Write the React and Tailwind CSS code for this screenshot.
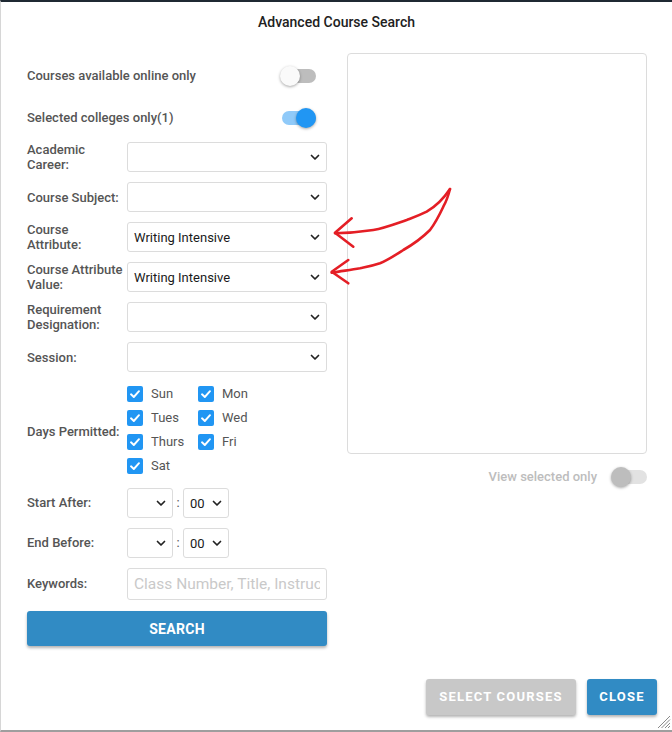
import React, { useState } from 'react';

const FONT = { fontFamily: 'Roboto, "Open Sans", Arial, sans-serif' };

const Chevron = () => (
    <svg width="10" height="7" viewBox="0 0 10 7" className="shrink-0">
        <path d="M1.5 1.5 L5 5 L8.5 1.5" fill="none" stroke="#222" strokeWidth="1.7" strokeLinecap="round" strokeLinejoin="round" />
    </svg>
);

const Toggle = ({ on, disabled }) => {
    const track = disabled ? 'bg-[#e2e2e2]' : on ? 'bg-[#90caf9]' : 'bg-[#bdbdbd]';
    const knob = disabled ? 'bg-[#bdbdbd] left-0' : on ? 'bg-[#2196f3] left-[16px]' : 'bg-[#fafafa] left-0';
    return (
        <div className="relative w-[36px] h-[20px] shrink-0">
            <div className={`absolute left-[2px] top-[3px] w-[34px] h-[14px] rounded-full ${track}`} />
            <div className={`absolute top-0 w-[20px] h-[20px] rounded-full shadow-[0_1px_3px_rgba(0,0,0,0.35)] ${knob}`} />
        </div>
    );
};

const SelectBox = ({ value, className = 'w-[200px]' }) => (
    <div className={`h-[30px] border border-[#dcdcdc] rounded-[3px] bg-white flex items-center justify-between pl-[6px] pr-[6px] ${className}`}>
        <span className="text-[13px] text-[#1a1a1a] whitespace-nowrap pt-[1px]">{value}</span>
        <Chevron />
    </div>
);

const FieldRow = ({ label, value }) => (
    <div className="flex items-center h-[30px]">
        <div className="w-[100px] text-[13px] leading-[15px] font-medium text-[#555] whitespace-nowrap">{label}</div>
        <SelectBox value={value} />
    </div>
);

const Check = ({ label }) => (
    <div className="flex items-center h-[24px]">
        <div className="w-[16px] h-[16px] rounded-[2px] bg-[#2196f3] flex items-center justify-center">
            <svg width="12" height="12" viewBox="0 0 12 12">
                <path d="M2 6.3 L4.8 9 L10 3.2" fill="none" stroke="white" strokeWidth="1.9" strokeLinecap="round" strokeLinejoin="round" />
            </svg>
        </div>
        <span className="ml-[8px] text-[13px] text-[#555]">{label}</span>
    </div>
);

const TimeRow = ({ label }) => (
    <div className="flex items-center h-[30px]">
        <div className="w-[100px] text-[13px] font-medium text-[#555]">{label}</div>
        <SelectBox value="" className="w-[46px]" />
        <span className="w-[10px] text-center text-[13px] text-[#555]">:</span>
        <SelectBox value="00" className="w-[46px]" />
    </div>
);

export default function App() {
    const [keywords, setKeywords] = useState('');

    return (
        <div style={FONT} className="relative w-[672px] h-[732px] bg-white border-t-2 border-t-[#1f2933] border-l border-l-[#d6d6d6] border-b-2 border-b-[#9e9e9e] flex flex-col overflow-hidden">
            {/* header */}
            <div className="h-[40px] flex items-center justify-center">
                <h1 className="text-[14px] font-medium text-[#212121]">Advanced Course Search</h1>
            </div>

            {/* body */}
            <div className="flex pl-[26px] pt-[11px] gap-[20px]">
                <div className="w-[300px] flex flex-col">
                    <div className="mt-[9px] h-[28px] flex items-center justify-between pr-[11px]">
                        <span className="text-[13px] font-medium text-[#555]">Courses available online only</span>
                        <Toggle on={false} />
                    </div>
                    <div className="mt-[14px] h-[28px] flex items-center justify-between pr-[11px]">
                        <span className="text-[13px] font-medium text-[#555]">Selected colleges only(1)</span>
                        <Toggle on />
                    </div>

                    <div className="mt-[10px] flex flex-col gap-[10px]">
                        <FieldRow label={<>Academic<br />Career:</>} value="" />
                        <FieldRow label="Course Subject:" value="" />
                        <FieldRow label={<>Course<br />Attribute:</>} value="Writing Intensive" />
                        <FieldRow label={<>Course Attribute<br />Value:</>} value="Writing Intensive" />
                        <FieldRow label={<>Requirement<br />Designation:</>} value="" />
                        <FieldRow label="Session:" value="" />
                    </div>

                    <div className="mt-[10px] flex items-center">
                        <div className="w-[100px] text-[13px] font-medium text-[#555] pt-[4px]">Days Permitted:</div>
                        <div className="grid grid-cols-[71px_71px]">
                            <Check label="Sun" />
                            <Check label="Mon" />
                            <Check label="Tues" />
                            <Check label="Wed" />
                            <Check label="Thurs" />
                            <Check label="Fri" />
                            <Check label="Sat" />
                        </div>
                    </div>

                    <div className="mt-[10px] flex flex-col gap-[10px]">
                        <TimeRow label="Start After:" />
                        <TimeRow label="End Before:" />
                    </div>

                    <div className="mt-[10px] flex items-center h-[32px]">
                        <div className="w-[100px] text-[13px] font-medium text-[#555]">Keywords:</div>
                        <input
                            value={keywords}
                            onChange={(e) => setKeywords(e.target.value)}
                            placeholder="Class Number, Title, Instructor"
                            className="w-[200px] h-[32px] border border-[#dcdcdc] rounded-[3px] px-[6px] text-[15.5px] text-[#222] placeholder:text-[#c9c9c9] outline-none"
                        />
                    </div>

                    <button className="mt-[11px] h-[35px] w-[300px] rounded-[3px] bg-[#318bc4] text-white text-[14px] font-bold tracking-[0.3px] pt-[2px] shadow-[0_2px_3px_rgba(0,0,0,0.3)]">
                        SEARCH
                    </button>
                </div>

                <div className="w-[300px] flex flex-col">
                    <div className="h-[401px] border border-[#dcdcdc] rounded-[4px]" />
                    <div className="mt-[13px] h-[20px] flex items-center justify-end gap-[14px]">
                        <span className="text-[13px] font-medium text-[#bdbdbd]">View selected only</span>
                        <Toggle disabled />
                    </div>
                </div>
            </div>

            {/* footer */}
            <div className="mt-auto flex justify-end gap-[11px] pr-[15px] pb-[15px]">
                <button className="h-[36px] w-[150px] rounded-[3px] bg-[#c8c8c8] text-white text-[13px] font-bold tracking-[1.2px] shadow-[0_2px_3px_rgba(0,0,0,0.3)]">
                    SELECT COURSES
                </button>
                <button className="h-[36px] w-[70px] rounded-[3px] bg-[#318bc4] text-white text-[13px] font-bold tracking-[1.2px] shadow-[0_2px_3px_rgba(0,0,0,0.3)]">
                    CLOSE
                </button>
            </div>

            {/* resize handle */}
            <svg className="absolute right-[1px] bottom-[1px]" width="14" height="14" viewBox="0 0 14 14">
                <path d="M13 1 L1 13 M13 4.5 L4.5 13 M13 8 L8 13 M13 11 L11 13" stroke="#8a8a8a" strokeWidth="1" />
            </svg>

            {/* annotation arrows */}
            <svg className="absolute left-[-1px] top-[-2px] pointer-events-none" width="672" height="732" viewBox="0 0 672 732">
                <g fill="none" stroke="#e41e25" strokeWidth="2.6" strokeLinecap="round" strokeLinejoin="round">
                    <path d="M450 189 C442 201, 433 208, 426.7 211.7 C418 216, 412 218, 406.7 220 C395 224, 385 228, 373.3 230 C360 232, 348 233, 335 233.3" />
                    <path d="M351.7 218.3 L335 232.7 L353.3 246.7" />
                    <path d="M450 189 C448 197, 446 202, 443.3 206.7 C438 218, 436 222, 430 230 C420 240, 412 245, 403.3 250 C394 256, 388 260, 380 263.3 C372 266, 366 267, 360 268.3 C350 270, 342 271, 331.7 272.7" />
                    <path d="M348.3 260 L331.7 271.7 L348.3 283.3" />
                </g>
            </svg>
        </div>
    );
}
